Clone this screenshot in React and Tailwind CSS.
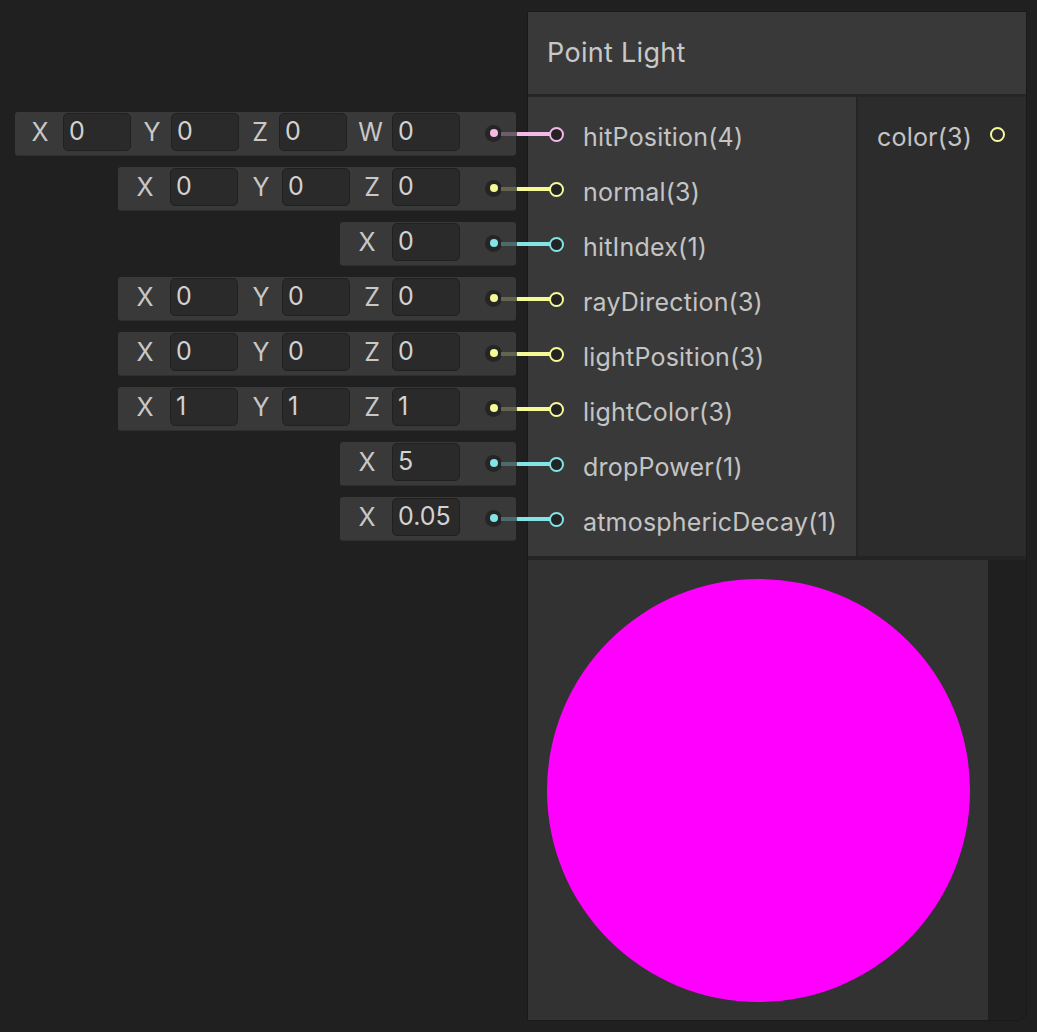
import React from 'react';

// port colours by vector size
const KIND = {
  v4: { dot: 'bg-[#f4b9e8]', dim: 'bg-[#6e5d6a]', line: 'bg-[#f4b9e8]', ring: 'border-[#f4b9e8]' },
  v3: { dot: 'bg-[#f6fa96]', dim: 'bg-[#64654f]', line: 'bg-[#f6fa96]', ring: 'border-[#f6fa96]' },
  v1: { dot: 'bg-[#84e3e6]', dim: 'bg-[#4c6b6c]', line: 'bg-[#84e3e6]', ring: 'border-[#84e3e6]' },
};

// label column widths: the four-wide row is packed a little tighter
const LABEL_W4 = ['w-[48px]', 'w-[40px]', 'w-[40px]', 'w-[45px]'];
const LABEL_W = ['w-[52px]', 'w-[44px]', 'w-[42px]'];

const INPUTS = [
  { name: 'hitPosition(4)', kind: 'v4', axes: [['X', '0'], ['Y', '0'], ['Z', '0'], ['W', '0']] },
  { name: 'normal(3)', kind: 'v3', axes: [['X', '0'], ['Y', '0'], ['Z', '0']] },
  { name: 'hitIndex(1)', kind: 'v1', axes: [['X', '0']] },
  { name: 'rayDirection(3)', kind: 'v3', axes: [['X', '0'], ['Y', '0'], ['Z', '0']] },
  { name: 'lightPosition(3)', kind: 'v3', axes: [['X', '0'], ['Y', '0'], ['Z', '0']] },
  { name: 'lightColor(3)', kind: 'v3', axes: [['X', '1'], ['Y', '1'], ['Z', '1']] },
  { name: 'dropPower(1)', kind: 'v1', axes: [['X', '5']] },
  { name: 'atmosphericDecay(1)', kind: 'v1', axes: [['X', '0.05']] },
];

function FieldRow({ axes, kind }) {
  const k = KIND[kind];
  const widths = axes.length === 4 ? LABEL_W4 : LABEL_W;
  return (
    <div className="relative h-[55px] flex items-center justify-end">
      <div className="h-[44px] flex items-center bg-[#393939] rounded-[3px] border-b border-[#2e2e2e]">
        {axes.map(([label, value], i) => (
          <div key={i} className="flex items-center">
            <span className={`${widths[i]} pl-[2px] text-center text-[25px] text-[#c8c8c8]`}>{label}</span>
            <div className="w-[68px] h-[38px] mb-[2px] rounded-[5px] bg-[#2a2a2a] border border-[#202020] flex items-center pl-[5px] text-[25px] text-[#d2d2d2]">
              {value}
            </div>
          </div>
        ))}
        <div className="w-[56px] flex items-center pl-[25px]">
          <div className="w-[17px] h-[17px] rounded-full bg-[#252525] flex items-center justify-center">
            <div className={`w-[8px] h-[8px] rounded-full ${k.dot}`} />
          </div>
        </div>
      </div>
      {/* wire from the inline value to the node port */}
      <div className="absolute left-[501px] top-1/2 -translate-y-1/2 flex items-center">
        <div className={`w-[16px] h-[4px] ${k.dim}`} />
        <div className={`w-[33px] h-[4px] ${k.line}`} />
      </div>
    </div>
  );
}

export default function App() {
  return (
    <div className="min-h-screen w-full bg-[#202020] font-['Inter','Noto_Sans',sans-serif] flex items-start pt-[11px]">
      {/* inline default values */}
      <div className="w-[516px] pt-[95px] flex flex-col">
        {INPUTS.map((p) => (
          <FieldRow key={p.name} axes={p.axes} kind={p.kind} />
        ))}
      </div>

      {/* node */}
      <div className="ml-[11px] w-[500px] bg-[#1f1f1f] border border-[#1a1a1a] rounded-br-[10px] flex flex-col">
        <div className="h-[82px] bg-[#393939] flex items-center pl-[19px] text-[27px] tracking-[0.3px] text-[#c8c8c8]">
          Point Light
        </div>
        <div className="h-[3px] bg-[#262626]" />
        <div className="flex">
          <div className="w-[328px] bg-[#393939] pt-[10px] pb-[9px] flex flex-col">
            {INPUTS.map((p) => (
              <div key={p.name} className="h-[55px] flex items-center">
                <div className={`relative ml-[21px] w-[15px] h-[15px] rounded-full border-2 bg-[#232323] ${KIND[p.kind].ring}`} />
                <span className="ml-[19px] mt-[7px] text-[25px] tracking-[0.2px] text-[#c4c4c4]">{p.name}</span>
              </div>
            ))}
          </div>
          <div className="w-[2px] bg-[#252525]" />
          <div className="flex-1 bg-[#2c2c2c] pt-[10px]">
            <div className="h-[55px] flex items-center justify-between pl-[19px] pr-[21px]">
              <span className="mt-[7px] text-[25px] tracking-[0.2px] text-[#c4c4c4]">color(3)</span>
              <div className="w-[15px] h-[15px] rounded-full border-2 border-[#f6fa96] bg-[#2c2c2c]" />
            </div>
          </div>
        </div>
        <div className="h-[4px] bg-[#242424]" />
        <div className="flex">
          <div className="w-[460px] h-[460px] bg-[#323232] flex items-center justify-center">
            <div className="w-[423px] h-[423px] rounded-full bg-[#ff00ff]" />
          </div>
          <div className="flex-1 bg-[#1f1f1f] rounded-br-[10px]" />
        </div>
      </div>
    </div>
  );
}
